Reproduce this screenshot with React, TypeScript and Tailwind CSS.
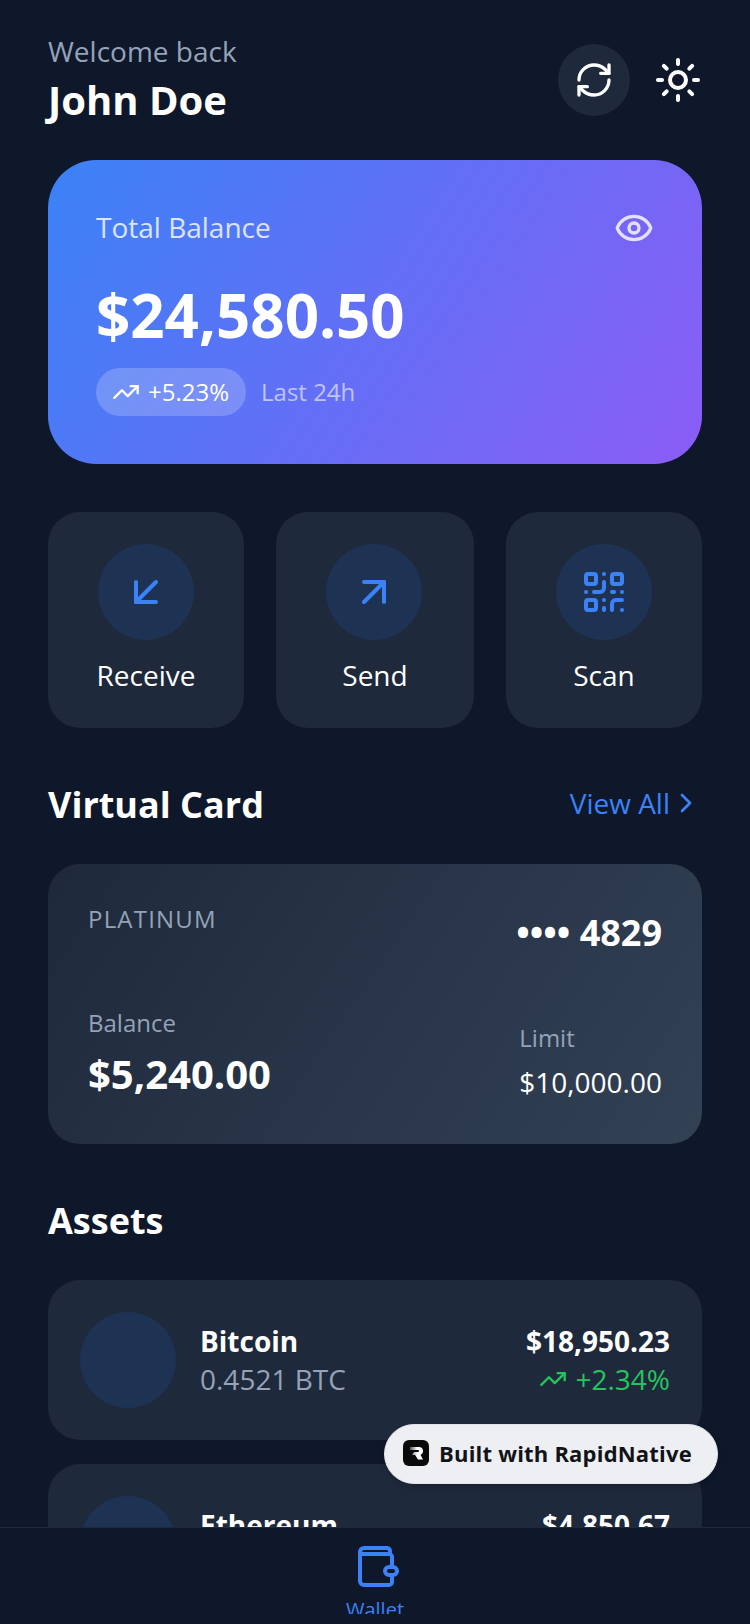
import {
  ArrowDownLeft,
  ArrowUpRight,
  ChevronRight,
  Eye,
  QrCode,
  RefreshCw,
  Sun,
  TrendingUp,
} from "lucide-react";

const actions = [
  { label: "Receive", Icon: ArrowDownLeft, width: "w-[196px]", nudge: "" },
  { label: "Send", Icon: ArrowUpRight, width: "w-[198px]", nudge: "-ml-[2px]" },
  { label: "Scan", Icon: QrCode, width: "w-[196px]", nudge: "" },
];

const assets = [
  { name: "Bitcoin", amount: "0.4521 BTC", value: "$18,950.23", change: "+2.34%" },
  { name: "Ethereum", amount: "1.2500 ETH", value: "$4,850.67", change: "+1.12%" },
];

const WalletIcon = () => (
  <svg width="48" height="48" viewBox="0 0 24 24" fill="none" stroke="currentColor" strokeWidth="2" strokeLinecap="round" strokeLinejoin="round" className="ml-[1px] shrink-0">
    <path d="M19 6V4.5A1.5 1.5 0 0 0 17.5 3H6a2 2 0 0 0-2 2v14.5a2 2 0 0 0 2 2h12.5a1.5 1.5 0 0 0 1.5-1.5v-3.5" />
    <path d="M4.5 6h14A1.5 1.5 0 0 1 20 7.5v5" />
    <rect x="16.5" y="12.5" width="6" height="4" rx="2" />
  </svg>
);

const RapidLogo = () => (
  <svg width="26" height="26" viewBox="0 0 26 26" className="-mt-[1px]">
    <defs>
      <linearGradient id="rapid-r" x1="0" y1="0" x2="1" y2="0">
        <stop offset="0" stopColor="#555" />
        <stop offset="0.55" stopColor="#fff" />
      </linearGradient>
    </defs>
    <rect width="26" height="26" rx="6" fill="#0a0a0a" />
    <path d="M7 7h9a4 4 0 0 1 1.5 7.7L20 19.5h-5l-3-4.5H9l2-3h4a1 1 0 0 0 0-2H7z" fill="url(#rapid-r)" />
  </svg>
);

export default function App() {
  return (
    <div className="relative flex h-[1624px] w-[750px] flex-col overflow-hidden bg-[#0f172a] font-['Open_Sans',sans-serif] text-white">
      <main className="min-h-0 flex-1 overflow-hidden px-12 pt-[32px]">
        {/* Header */}
        <header className="flex h-[96px] items-center justify-between">
          <div>
            <p className="text-[28px] leading-[38px] text-[#94a3b8]">Welcome back</p>
            <h1 className="mt-[2px] text-[40px] leading-[56px] font-bold">John Doe</h1>
          </div>
          <div className="flex items-center gap-6">
            <button className="flex h-[72px] w-[72px] items-center justify-center rounded-full bg-[#1e293b]">
              <RefreshCw size={40} strokeWidth={2} />
            </button>
            <Sun size={48} strokeWidth={2} />
          </div>
        </header>

        {/* Balance */}
        <section className="mt-8 h-[304px] rounded-[48px] bg-[linear-gradient(124deg,#3b82f6,#8b5cf6)] p-12">
          <div className="flex items-center justify-between">
            <p className="mb-[2px] text-[28px] leading-[38px] text-white/80">Total Balance</p>
            <Eye size={40} className="text-white/80" strokeWidth={2} />
          </div>
          <p className="mt-[27px] text-[60px] leading-[80px] font-bold">$24,580.50</p>
          <div className="mt-[13px] flex items-center gap-[15px]">
            <div className="flex h-12 items-center gap-2 rounded-full bg-white/20 pr-[17px] pl-4">
              <TrendingUp size={28} strokeWidth={2} />
              <span className="text-[24px] leading-[32px]">+5.23%</span>
            </div>
            <span className="text-[24px] leading-[32px] text-white/60">Last 24h</span>
          </div>
        </section>

        {/* Actions */}
        <section className="mt-12 flex justify-between">
          {actions.map(({ label, Icon, width, nudge }) => (
            <div
              key={label}
              className={`flex h-[216px] flex-col items-center rounded-[32px] bg-[#1e293b] pt-8 ${width}`}
            >
              <div className={`flex h-24 w-24 items-center justify-center rounded-full bg-[#1e3354] ${nudge}`}>
                <Icon size={48} strokeWidth={2} className="text-[#3b82f6]" />
              </div>
              <span className="mt-[15px] text-[28px] leading-[40px]">{label}</span>
            </div>
          ))}
        </section>

        {/* Virtual card */}
        <section className="mt-[49px]">
          <div className="flex h-[56px] items-center justify-between">
            <h2 className="text-[36px] leading-[56px] font-bold">Virtual Card</h2>
            <div className="flex items-center pb-[5px] text-[#3b82f6]">
              <span className="text-[28px] leading-[40px]">View All</span>
              <ChevronRight size={32} strokeWidth={2} />
            </div>
          </div>
          <div className="mt-[31px] h-[280px] rounded-[32px] bg-[linear-gradient(124deg,#1e293b,#334155)] p-10">
            <div className="flex items-start justify-between">
              <span className="text-[24px] leading-[30px] tracking-[1.2px] text-[#94a3b8]">PLATINUM</span>
              <span className="mt-[9px] text-[36px] leading-[40px] font-bold">•••• 4829</span>
            </div>
            <div className="mt-[54px] flex items-end justify-between">
              <div>
                <p className="text-[24px] leading-[32px] text-[#94a3b8]">Balance</p>
                <p className="mt-[7px] text-[40px] leading-[56px] font-bold">$5,240.00</p>
              </div>
              <div>
                <p className="text-[24px] leading-[32px] text-[#94a3b8]">Limit</p>
                <p className="mt-2 text-[28px] leading-[40px]">$10,000.00</p>
              </div>
            </div>
          </div>
        </section>

        {/* Assets */}
        <section className="mt-[49px]">
          <h2 className="text-[36px] leading-[56px] font-bold">Assets</h2>
          <div className="mt-[31px] flex flex-col gap-6">
            {assets.map((asset) => (
              <div key={asset.name} className="flex h-[160px] items-center rounded-[32px] bg-[#1e293b] px-8">
                <div className="h-24 w-24 rounded-full bg-[#1e3354]" />
                <div className="ml-6 flex-1">
                  <p className="text-[28px] leading-[38px] font-bold">{asset.name}</p>
                  <p className="text-[28px] leading-[38px] text-[#94a3b8]">{asset.amount}</p>
                </div>
                <div className="flex flex-col items-end">
                  <p className="text-[28px] leading-[38px] font-bold">{asset.value}</p>
                  <div className="flex items-center gap-2 text-[#22c55e]">
                    <TrendingUp size={28} strokeWidth={2} />
                    <span className="text-[28px] leading-[38px]">{asset.change}</span>
                  </div>
                </div>
              </div>
            ))}
          </div>
        </section>
      </main>

      {/* Tab bar */}
      <nav className="h-[97px] shrink-0 border-t border-[#1e293b] bg-[#0f172a] text-[#3b82f6]">
        <div className="flex h-[86px] flex-col items-center overflow-hidden pt-[14px]">
          <WalletIcon />
          <span className="mt-[6px] shrink-0 text-[20px] leading-[28px]">Wallet</span>
        </div>
      </nav>

      {/* Badge */}
      <div className="absolute top-[1424px] left-[384px] flex h-[60px] w-[334px] items-center gap-[10px] rounded-full border border-[#e2e4e9] bg-[#eeeff2] pb-[2px] pl-[18px] shadow-md">
        <RapidLogo />
        <span className="text-[22px] leading-[28px] font-bold tracking-[0.2px] text-[#111318]">Built with RapidNative</span>
      </div>
    </div>
  );
}
